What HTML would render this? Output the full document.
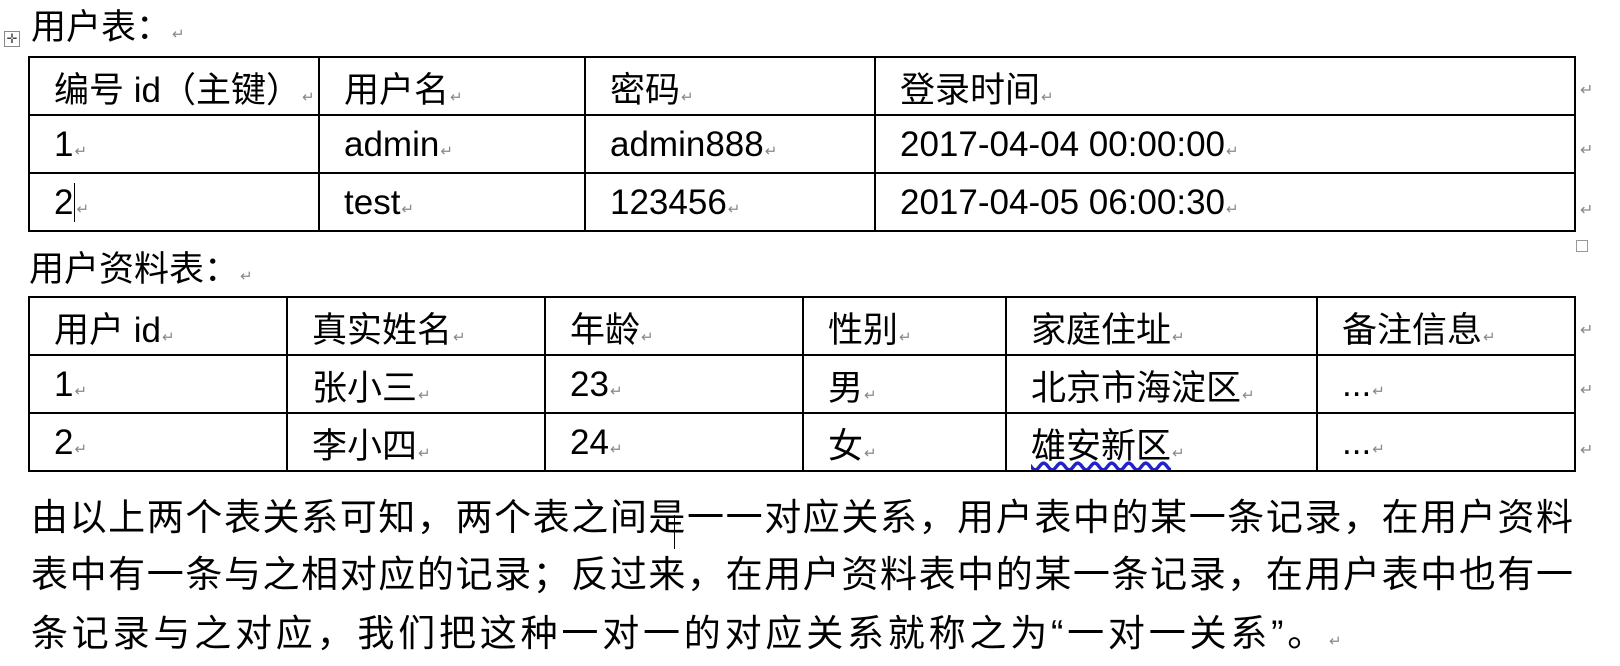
<!DOCTYPE html>
<html><head><meta charset="utf-8"><style>
body{margin:0;width:1620px;height:666px;background:#fff;position:relative;overflow:hidden;font-family:"Liberation Sans","Noto Sans CJK SC",sans-serif;color:#000}
.a{position:absolute;white-space:nowrap}
table{position:absolute;border-collapse:collapse;table-layout:fixed;font-size:35px}
td{border:2px solid #000;padding:2px 0 0 24px;height:54px;vertical-align:middle;white-space:nowrap;overflow:hidden}
.m{color:#888;font-size:15px;margin-left:1px}
.r{position:absolute;left:1580px;color:#888;font-size:16px}
.p{position:absolute;left:31px;width:1542px;font-size:37px;text-align:justify;text-align-last:justify;white-space:nowrap}
</style></head><body>
<div class="a" style="left:4px;top:31px;width:14px;height:14px;border:1px solid #888;font-size:13px;line-height:14px;text-align:center;color:#444">✛</div>
<div class="a" style="left:31px;top:8px;font-size:35px;line-height:40px">用户表：<span class="m">↵</span></div>
<table style="left:28px;top:56px;width:1546px">
<colgroup><col style="width:290px"><col style="width:266px"><col style="width:290px"><col style="width:700px"></colgroup>
<tr><td>编号 id（主键）<span class="m">↵</span></td><td>用户名<span class="m">↵</span></td><td>密码<span class="m">↵</span></td><td>登录时间<span class="m">↵</span></td></tr>
<tr><td>1<span class="m">↵</span></td><td>admin<span class="m">↵</span></td><td>admin888<span class="m">↵</span></td><td>2017-04-04 00:00:00<span class="m">↵</span></td></tr>
<tr><td>2<span style="border-left:1px solid #000;margin-left:1px"></span><span class="m">↵</span></td><td>test<span class="m">↵</span></td><td>123456<span class="m">↵</span></td><td>2017-04-05 06:00:30<span class="m">↵</span></td></tr>
</table>
<div class="r" style="top:80px">↵</div><div class="r" style="top:140px">↵</div><div class="r" style="top:200px">↵</div>
<div class="a" style="left:1576px;top:240px;width:10px;height:10px;border:1px solid #999"></div>
<div class="a" style="left:29px;top:250px;font-size:35px;line-height:40px">用户资料表：<span class="m">↵</span></div>
<table style="left:28px;top:296px;width:1546px">
<colgroup><col style="width:258px"><col style="width:258px"><col style="width:258px"><col style="width:203px"><col style="width:311px"><col style="width:258px"></colgroup>
<tr><td>用户 id<span class="m">↵</span></td><td>真实姓名<span class="m">↵</span></td><td>年龄<span class="m">↵</span></td><td>性别<span class="m">↵</span></td><td>家庭住址<span class="m">↵</span></td><td>备注信息<span class="m">↵</span></td></tr>
<tr><td>1<span class="m">↵</span></td><td>张小三<span class="m">↵</span></td><td>23<span class="m">↵</span></td><td>男<span class="m">↵</span></td><td>北京市海淀区<span class="m">↵</span></td><td>...<span class="m">↵</span></td></tr>
<tr><td>2<span class="m">↵</span></td><td>李小四<span class="m">↵</span></td><td>24<span class="m">↵</span></td><td>女<span class="m">↵</span></td><td><span style="text-decoration:underline wavy #22c;text-underline-offset:4px">雄安新区</span><span class="m">↵</span></td><td>...<span class="m">↵</span></td></tr>
</table>
<div class="r" style="top:320px">↵</div><div class="r" style="top:380px">↵</div><div class="r" style="top:440px">↵</div>
<div class="p" style="top:487px">由以上两个表关系可知，两个表之间是一一对应关系，用户表中的某一条记录，在用户资料</div>
<div class="p" style="top:544px">表中有一条与之相对应的记录；反过来，在用户资料表中的某一条记录，在用户表中也有一</div>
<div class="a" style="left:31px;top:603px;font-size:37px;letter-spacing:3.8px">条记录与之对应，我们把这种一对一的对应关系就称之为“一对一关系”。<span class="m" style="letter-spacing:0">↵</span></div>
<div class="a" style="left:674px;top:515px;width:1px;height:34px;background:#000"></div>
</body></html>
